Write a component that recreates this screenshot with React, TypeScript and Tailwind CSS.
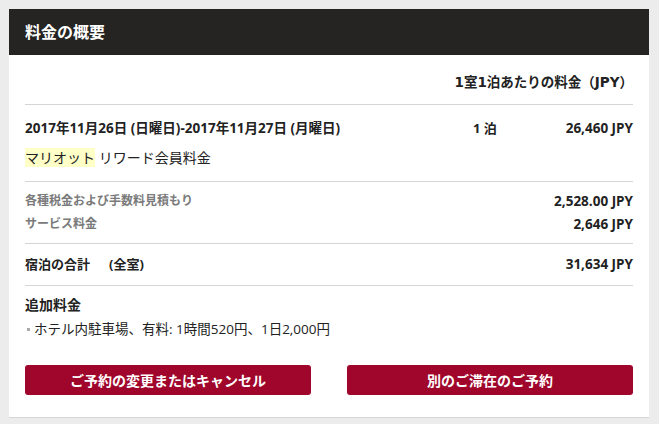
export default function App() {
  const font = { fontFamily: '"Open Sans", "Noto Sans CJK JP", sans-serif' };
  const wide = { fontFamily: '"DejaVu Sans", "Noto Sans CJK JP", sans-serif' };
  return (
    <div className="w-[659px] h-[424px] bg-[#ececec] pt-[9px] pl-[9px]" style={font}>
      <div className="w-[640px] bg-white border-b border-[#d6d6d6]">
        {/* Header */}
        <div className="h-[46px] bg-[#252422] px-4 flex items-center">
          <h1 className="text-[16px] font-bold text-white leading-none">料金の概要</h1>
        </div>

        <div className="px-4">
          {/* Column caption */}
          <div
            className="pt-[17px] pb-[12px] border-b border-[#d4d4d4] text-right text-[13.5px] font-bold leading-[20px] text-[#222]"
            style={wide}
          >
            1室1泊あたりの料金（JPY）
          </div>

          {/* Stay row */}
          <div className="pt-[13px] pb-[13px] border-b border-[#d4d4d4]">
            <div className="flex items-center text-[13px] font-bold leading-[20px] text-[#222]">
              <div className="flex-1 text-[13.5px]">2017年11月26日 (日曜日)-2017年11月27日 (月曜日)</div>
              <div className="w-[60px]">1 泊</div>
              <div className="w-[100px] text-right text-[13.5px]">26,460 JPY</div>
            </div>
            <div className="mt-[10px] text-[14px] leading-[20px] text-[#222]">
              <span className="bg-[#ffffc8]">マリオット</span> リワード会員料金
            </div>
          </div>

          {/* Taxes */}
          <div className="pt-[9px] pb-[9px] border-b border-[#d4d4d4] text-[12px] font-bold leading-[20px]">
            <div className="flex justify-between items-center">
              <span className="text-[#7a7a7a]">各種税金および手数料見積もり</span>
              <span className="text-[#222] text-[13.5px]">2,528.00 JPY</span>
            </div>
            <div className="mt-[3px] flex justify-between items-center">
              <span className="text-[#7a7a7a]">サービス料金</span>
              <span className="text-[#222] text-[13.5px]">2,646 JPY</span>
            </div>
          </div>

          {/* Total */}
          <div className="pt-[10px] pb-[11px] border-b border-[#d4d4d4] flex justify-between items-center text-[13px] font-bold leading-[20px] text-[#222]">
            <span>
              宿泊の合計<span className="ml-[19px]">(全室)</span>
            </span>
            <span className="text-[13.5px]">31,634 JPY</span>
          </div>

          {/* Extra charges */}
          <div className="pt-[9px]">
            <div className="text-[14px] font-bold leading-[20px] text-[#222]">追加料金</div>
            <div className="mt-[4px] flex items-center text-[13.5px] leading-[20px] text-[#222]">
              <span className="w-[3px] h-[3px] bg-[#aaa] ml-[2px] mr-[4px]" />
              ホテル内駐車場、有料: 1時間520円、1日2,000円
            </div>
          </div>

          {/* Buttons */}
          <div className="mt-[26px] pb-[22px] grid grid-cols-2 gap-9">
            <button className="h-[30px] rounded-[3px] bg-[#a0062b] text-white text-[14px] font-bold">
              ご予約の変更またはキャンセル
            </button>
            <button className="h-[30px] rounded-[3px] bg-[#a0062b] text-white text-[14px] font-bold">
              別のご滞在のご予約
            </button>
          </div>
        </div>
      </div>
    </div>
  );
}
